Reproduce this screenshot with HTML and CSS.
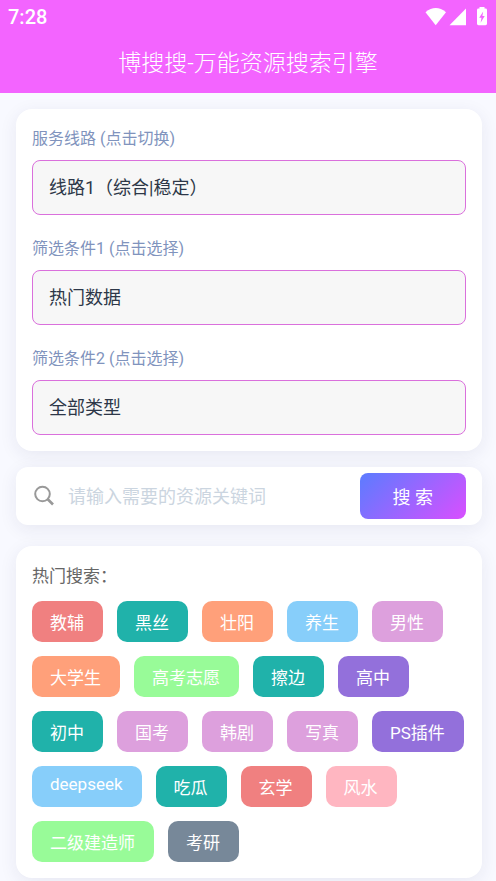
FILE: index.html
```html
<!DOCTYPE html>
<html lang="zh-CN">
<head>
<meta charset="utf-8">
<meta name="viewport" content="width=device-width, initial-scale=1">
<title>博搜搜-万能资源搜索引擎</title>
<link rel="stylesheet" href="styles.css">
</head>
<body>
<header class="header">
  <div class="status">
    <span class="clock">7:28</span>
    <svg class="status-icons" width="64" height="20" viewBox="0 0 64 20" fill="#fff" aria-hidden="true">
      <path d="M0.5 5.2Q10.700 -3 21 5.200L10.700 18.200Z"/>
      <path d="M41 1.500V18.300H24.500Z"/>
      <path fill-rule="evenodd" d="M54.500 1.600V0H59.500V1.600H60.500Q62 1.600 62 3V16.800Q62 18.200 60.500 18.200H53.500Q52 18.200 52 16.800V3Q52 1.600 53.500 1.600ZM58.200 4.500L54.200 10.800H56.500L55.600 15.800L59.700 9H57.400L58.200 4.500Z"/>
    </svg>
  </div>
  <h1 class="title">博搜搜-万能资源搜索引擎</h1>
</header>
<main class="main">
  <form class="card filters">
    <div class="field">
      <label for="line">服务线路 (点击切换)</label>
      <select id="line"><option>线路1（综合|稳定）</option></select>
    </div>
    <div class="field">
      <label for="filter1">筛选条件1 (点击选择)</label>
      <select id="filter1"><option>热门数据</option></select>
    </div>
    <div class="field">
      <label for="filter2">筛选条件2 (点击选择)</label>
      <select id="filter2"><option>全部类型</option></select>
    </div>
  </form>
  <form class="card search" role="search">
    <svg class="search-icon" width="24" height="24" viewBox="0 0 24 24" fill="none" stroke="#999" stroke-width="2" aria-hidden="true">
      <circle cx="10.500" cy="10" r="7.300"/>
      <path d="M15.500 15L21 20.500" stroke-width="2.600"/>
    </svg>
    <input type="text" placeholder="请输入需要的资源关键词" aria-label="请输入需要的资源关键词">
    <button type="button">搜 索</button>
  </form>
  <section class="card hot">
    <h2>热门搜索：</h2>
    <nav class="tags">
      <a href="#" class="coral">教辅</a>
      <a href="#" class="teal">黑丝</a>
      <a href="#" class="salmon">壮阳</a>
      <a href="#" class="sky">养生</a>
      <a href="#" class="plum">男性</a>
      <a href="#" class="salmon">大学生</a>
      <a href="#" class="green">高考志愿</a>
      <a href="#" class="teal">擦边</a>
      <a href="#" class="purple">高中</a>
      <a href="#" class="teal">初中</a>
      <a href="#" class="plum">国考</a>
      <a href="#" class="plum">韩剧</a>
      <a href="#" class="plum">写真</a>
      <a href="#" class="purple">PS插件</a>
      <a href="#" class="sky">deepseek</a>
      <a href="#" class="teal">吃瓜</a>
      <a href="#" class="coral">玄学</a>
      <a href="#" class="pink">风水</a>
      <a href="#" class="green">二级建造师</a>
      <a href="#" class="slate">考研</a>
    </nav>
  </section>
</main>
</body>
</html>
```
FILE: styles.css
```css
* {
  box-sizing: border-box;
}

body {
  margin: 0;
  background: #f8f9ff;
  font-family: Roboto, "Noto Sans CJK SC", sans-serif;
}

.header {
  background: #f364ff;
  color: #fff;
  padding-bottom: 13px;
}

.status {
  display: flex;
  justify-content: space-between;
  align-items: center;
  height: 33px;
  padding: 0 7px 0 8px;
}

.clock {
  font-size: 20px;
  font-weight: 500;
}

.title {
  margin: 0;
  padding-top: 14px;
  font-size: 23px;
  font-weight: 300;
  line-height: 33px;
  text-align: center;
}

.main {
  padding: 16px 14px 4px 16px;
}

.card {
  background: #fff;
  border-radius: 16px;
  box-shadow: 0 4px 18px rgba(40, 40, 90, 0.08);
}

.filters {
  display: grid;
  gap: 20px;
  padding: 16px;
}

.field {
  display: grid;
  gap: 8px;
}

.field label {
  color: #8093bd;
  font-size: 16px;
  line-height: 27px;
}

.field select {
  appearance: none;
  width: 100%;
  height: 55px;
  padding: 0 16px;
  border: 1px solid #da70dc;
  border-radius: 8px;
  background: #f7f7f7;
  color: #2d3748;
  font-family: inherit;
  font-size: 18px;
  font-weight: 400;
}

.search {
  display: flex;
  align-items: center;
  margin-top: 16px;
  padding: 6px 16px;
  border-radius: 12px;
}

.search-icon {
  flex: none;
}

.search input {
  flex: 1;
  min-width: 0;
  padding: 0 12px;
  border: 0;
  outline: 0;
  background: none;
  font-family: inherit;
  font-size: 18px;
}

.search input::placeholder {
  color: #cbd5e0;
}

.search button {
  height: 46px;
  padding: 0 33px;
  border: 0;
  border-radius: 8px;
  background: linear-gradient(135deg, #5b7cff, #d94fff);
  color: #fff;
  font-family: inherit;
  font-size: 18px;
}

.hot {
  margin-top: 21px;
  padding: 16px;
}

.hot h2 {
  margin: 0 0 10px;
  color: #666;
  font-size: 17px;
  font-weight: 400;
  line-height: 29px;
}

.tags {
  display: flex;
  flex-wrap: wrap;
  gap: 14px;
}

.tags a {
  padding: 8px 19px 8px 18px;
  border-radius: 10px;
  color: #fff;
  font-size: 17px;
  text-decoration: none;
}

.coral { background: #f08080; }
.teal { background: #20b2aa; }
.salmon { background: #ffa07a; }
.sky { background: #87cefa; }
.plum { background: #dda0dd; }
.green { background: #98fb98; }
.purple { background: #9370db; }
.pink { background: #ffb6c1; }
.slate { background: #778899; }
```
